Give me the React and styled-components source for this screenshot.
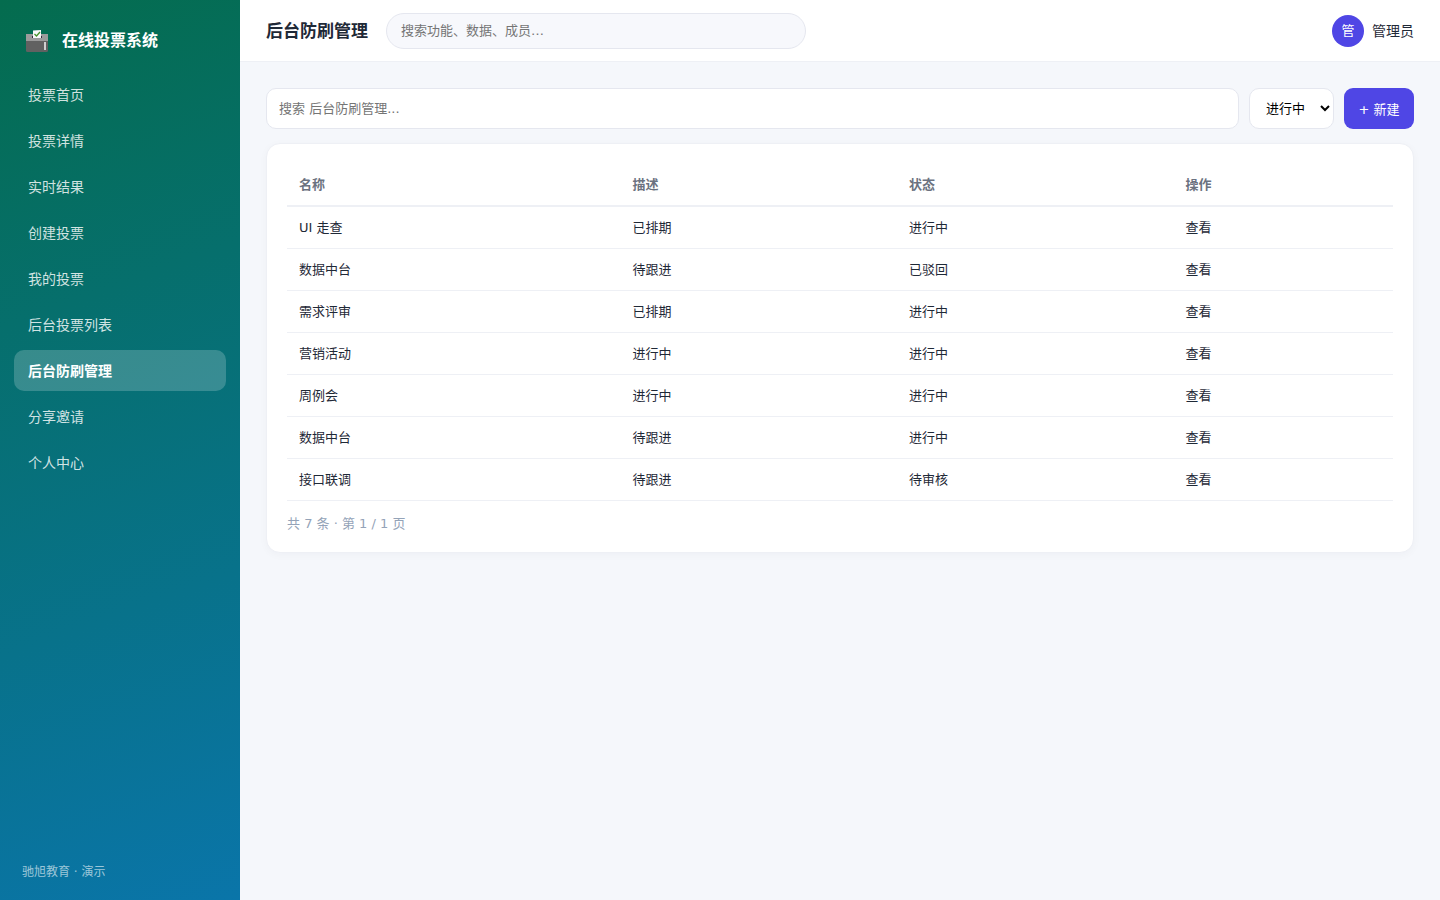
import React from 'react';
import styled, { createGlobalStyle } from 'styled-components';

const GlobalStyle = createGlobalStyle`
  * {
    box-sizing: border-box;
  }
  body {
    margin: 0;
    background: #f5f7fb;
    color: #1f2937;
    font-size: 14px;
    line-height: 20px;
  }
  body, input, select, button {
    font-family: 'DejaVu Sans', 'Noto Sans CJK SC', sans-serif;
  }
`;

const Layout = styled.div`
  display: flex;
  min-height: 100vh;
`;

const Sidebar = styled.aside`
  display: flex;
  flex-direction: column;
  flex: 0 0 240px;
  padding: 20px 14px;
  color: #fff;
  background: linear-gradient(160deg, #046c4e, #0a75a9);
`;

const Brand = styled.div`
  display: flex;
  align-items: center;
  gap: 14px;
  height: 42px;
  padding: 0 12px;
  margin-bottom: 12px;
  font-size: 16px;
  font-weight: 700;

  svg {
    flex: none;
  }
`;

const Nav = styled.nav`
  display: flex;
  flex-direction: column;
  gap: 5px;
`;

const NavLink = styled.a`
  padding: 11px 14px 9px;
  border-radius: 10px;
  line-height: 21px;
  text-decoration: none;
  color: ${({ $active }) => ($active ? '#fff' : 'rgba(255, 255, 255, .82)')};
  font-weight: ${({ $active }) => ($active ? 700 : 400)};
  background: ${({ $active }) => ($active ? 'rgba(255, 255, 255, .2)' : 'transparent')};
`;

const SideFooter = styled.div`
  margin-top: auto;
  padding: 0 8px;
  font-size: 12px;
  line-height: 16px;
  color: rgba(255, 255, 255, .6);
`;

const Main = styled.div`
  flex: 1;
  min-width: 0;
`;

const Header = styled.header`
  display: flex;
  align-items: center;
  gap: 18px;
  height: 62px;
  padding: 0 26px;
  background: #fff;
  border-bottom: 1px solid #eef0f5;
`;

const Title = styled.h1`
  margin: 0;
  font-size: 17px;
  font-weight: 700;
`;

const GlobalSearch = styled.input`
  width: 420px;
  height: 36px;
  padding: 0 14px;
  border: 1px solid #e5e7ef;
  border-radius: 18px;
  background: #f7f8fc;
  font-size: 13px;
`;

const User = styled.div`
  display: flex;
  align-items: center;
  gap: 8px;
  margin-left: auto;
`;

const Avatar = styled.span`
  display: flex;
  align-items: center;
  justify-content: center;
  width: 32px;
  height: 32px;
  border-radius: 50%;
  background: #4f46e5;
  color: #fff;
  font-size: 13px;
`;

const Content = styled.main`
  padding: 26px;
`;

const Toolbar = styled.div`
  display: flex;
  gap: 10px;
  height: 41px;
  margin-bottom: 14px;
`;

const Search = styled.input`
  flex: 1;
  min-width: 0;
  padding: 0 12px;
  border: 1px solid #e5e7ef;
  border-radius: 10px;
  background: #fff;
  font-size: 13px;
`;

const Select = styled.select`
  width: 85px;
  padding: 0 0 0 12px;
  border: 1px solid #e5e7ef;
  border-radius: 10px;
  background: #fff;
  color: #000;
  font-size: 13px;
`;

const CreateButton = styled.button`
  width: 70px;
  padding: 0;
  border: 0;
  border-radius: 9px;
  background: #4f46e5;
  color: #fff;
  font-size: 13px;
`;

const Card = styled.section`
  padding: 20px;
  border: 1px solid #eef0f5;
  border-radius: 14px;
  background: #fff;
  box-shadow: 0 2px 8px rgba(31, 41, 55, .03);
`;

const Table = styled.table`
  width: 100%;
  border-collapse: separate;
  border-spacing: 0;
  font-size: 13px;
  line-height: 17px;

  th, td {
    padding: 12px;
    text-align: left;
    border-bottom: 1px solid #eef0f5;
  }
  th {
    color: #6b7280;
    font-weight: 700;
    border-bottom-width: 2px;
  }
`;

const Pager = styled.p`
  margin: 14px 0 0;
  font-size: 13px;
  line-height: 17px;
  color: #94a3b8;
`;

const menus = [
  '投票首页',
  '投票详情',
  '实时结果',
  '创建投票',
  '我的投票',
  '后台投票列表',
  '后台防刷管理',
  '分享邀请',
  '个人中心',
];

const current = '后台防刷管理';

const columns = ['名称', '描述', '状态', '操作'];

const rows = [
  ['UI 走查', '已排期', '进行中'],
  ['数据中台', '待跟进', '已驳回'],
  ['需求评审', '已排期', '进行中'],
  ['营销活动', '进行中', '进行中'],
  ['周例会', '进行中', '进行中'],
  ['数据中台', '待跟进', '进行中'],
  ['接口联调', '待跟进', '待审核'],
];

function BallotBox() {
  return (
    <svg width="22" height="22" viewBox="0 0 22 22" aria-hidden="true">
      <path d="M0 4h22v7H0z" fill="#9b9b9b"/>
      <path d="M0 11h22v9.500q0 1.500-1.500 1.500h-19q-1.500 0-1.500-1.500z" fill="#616161"/>
      <path d="M6 6h10v2H6z" fill="#35283f"/>
      <path d="M7 .5l8-.5v8H7z" fill="#fafafa"/>
      <path d="M8.500 4l2 2 3.500-4" fill="none" stroke="#43932a" strokeWidth="1.300"/>
      <path d="M18 12h2v8h-2z" fill="#d0d0d0"/>
    </svg>
  );
}

export default function App() {
  return (
    <Layout>
      <GlobalStyle/>
      <Sidebar>
        <Brand>
          <BallotBox/>
          <span>在线投票系统</span>
        </Brand>
        <Nav>
          {menus.map((name) => (
            <NavLink href="#" key={ name } $active={ name === current }>{name}</NavLink>
          ))}
        </Nav>
        <SideFooter>驰旭教育 · 演示</SideFooter>
      </Sidebar>
      <Main>
        <Header>
          <Title>{current}</Title>
          <GlobalSearch type="search" aria-label="全局搜索" placeholder="搜索功能、数据、成员…"/>
          <User>
            <Avatar>管</Avatar>
            <span>管理员</span>
          </User>
        </Header>
        <Content>
          <Toolbar>
            <Search type="search" aria-label="搜索" placeholder={ `搜索 ${current}...` }/>
            <Select aria-label="状态" defaultValue="进行中">
              <option>进行中</option>
              <option>已驳回</option>
              <option>待审核</option>
            </Select>
            <CreateButton type="button">+ 新建</CreateButton>
          </Toolbar>
          <Card>
            <Table>
              <thead>
                <tr>
                  {columns.map((name) => <th key={ name } scope="col">{name}</th>)}
                </tr>
              </thead>
              <tbody>
                {rows.map((row, i) => (
                  <tr key={ i }>
                    {row.map((text, j) => <td key={ j }>{text}</td>)}
                    <td>查看</td>
                  </tr>
                ))}
              </tbody>
            </Table>
            <Pager>共 {rows.length} 条 · 第 1 / 1 页</Pager>
          </Card>
        </Content>
      </Main>
    </Layout>
  );
}
